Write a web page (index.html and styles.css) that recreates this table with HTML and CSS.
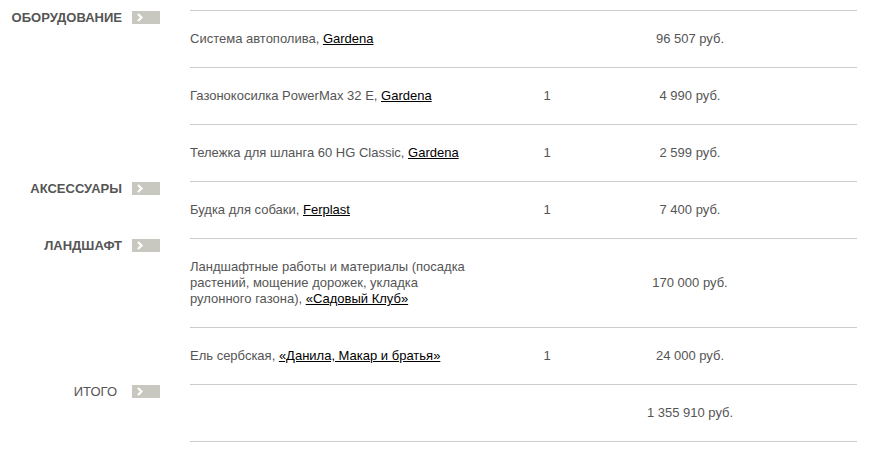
FILE: index.html
```html
<!DOCTYPE html>
<html lang="ru">
<head>
<meta charset="utf-8">
<title>Смета</title>
<link rel="stylesheet" href="styles.css">
</head>
<body>
<div class="estimate">
  <section class="group">
    <div class="label"><span class="label-text">ОБОРУДОВАНИЕ</span><span class="arrow"><svg width="28" height="13" viewBox="0 0 28 13"><polyline points="6,3 9.5,6.5 6,10" fill="none" stroke="#fff" stroke-width="2.2"/></svg></span></div>
    <div class="rows">
      <div class="row"><div class="desc">Система автополива, <a href="#">Gardena</a></div><div class="qty"></div><div class="price">96 507 руб.</div></div>
      <div class="row"><div class="desc">Газонокосилка PowerMax 32 E, <a href="#">Gardena</a></div><div class="qty">1</div><div class="price">4 990 руб.</div></div>
      <div class="row"><div class="desc">Тележка для шланга 60 HG Classic, <a href="#">Gardena</a></div><div class="qty">1</div><div class="price">2 599 руб.</div></div>
    </div>
  </section>
  <section class="group">
    <div class="label"><span class="label-text">АКСЕССУАРЫ</span><span class="arrow"><svg width="28" height="13" viewBox="0 0 28 13"><polyline points="6,3 9.5,6.5 6,10" fill="none" stroke="#fff" stroke-width="2.2"/></svg></span></div>
    <div class="rows">
      <div class="row"><div class="desc">Будка для собаки, <a href="#">Ferplast</a></div><div class="qty">1</div><div class="price">7 400 руб.</div></div>
    </div>
  </section>
  <section class="group">
    <div class="label"><span class="label-text">ЛАНДШАФТ</span><span class="arrow"><svg width="28" height="13" viewBox="0 0 28 13"><polyline points="6,3 9.5,6.5 6,10" fill="none" stroke="#fff" stroke-width="2.2"/></svg></span></div>
    <div class="rows">
      <div class="row"><div class="desc">Ландшафтные работы и материалы (посадка растений, мощение дорожек, укладка рулонного газона), <a href="#">«Садовый Клуб»</a></div><div class="qty"></div><div class="price">170 000 руб.</div></div>
      <div class="row"><div class="desc">Ель сербская, <a href="#">«Данила, Макар и братья»</a></div><div class="qty">1</div><div class="price">24 000 руб.</div></div>
    </div>
  </section>
  <section class="group total">
    <div class="label"><span class="label-text total-text">ИТОГО</span><span class="arrow"><svg width="28" height="13" viewBox="0 0 28 13"><polyline points="6,3 9.5,6.5 6,10" fill="none" stroke="#fff" stroke-width="2.2"/></svg></span></div>
    <div class="rows">
      <div class="row"><div class="desc"></div><div class="qty"></div><div class="price">1 355 910 руб.</div></div>
    </div>
  </section>
</div>
</body>
</html>
```
FILE: styles.css
```css
html, body {
  margin: 0;
  padding: 0;
  background: #fff;
}
body {
  font-family: Arial, "Liberation Sans", sans-serif;
  font-size: 13px;
  color: #555;
}
.estimate {
  padding-top: 10px;
  width: 857px;
}
.group {
  display: grid;
  grid-template-columns: 190px 667px;
}
.label {
  display: flex;
  justify-content: flex-end;
  align-items: center;
  gap: 10px;
  padding-right: 30px;
  padding-top: 1px;
  height: 13px;
}
.label-text {
  font-weight: bold;
  color: #555;
  line-height: 14px;
}
.total-text {
  font-weight: normal;
  margin-right: 5px;
}
.arrow {
  display: block;
  width: 28px;
  height: 13px;
  background: #c8c8c0;
}
.arrow svg {
  display: block;
}
.row {
  display: grid;
  grid-template-columns: 290px 134px 152px 91px;
  align-items: center;
  border-top: 1px solid #ccc;
  padding: 20px 0;
  line-height: 16px;
  min-height: 16px;
}
.total .row {
  border-bottom: 1px solid #ccc;
}
.desc {
  padding-right: 8px;
}
.qty, .price {
  text-align: center;
}
a {
  color: #000;
  text-decoration: underline;
}
```
